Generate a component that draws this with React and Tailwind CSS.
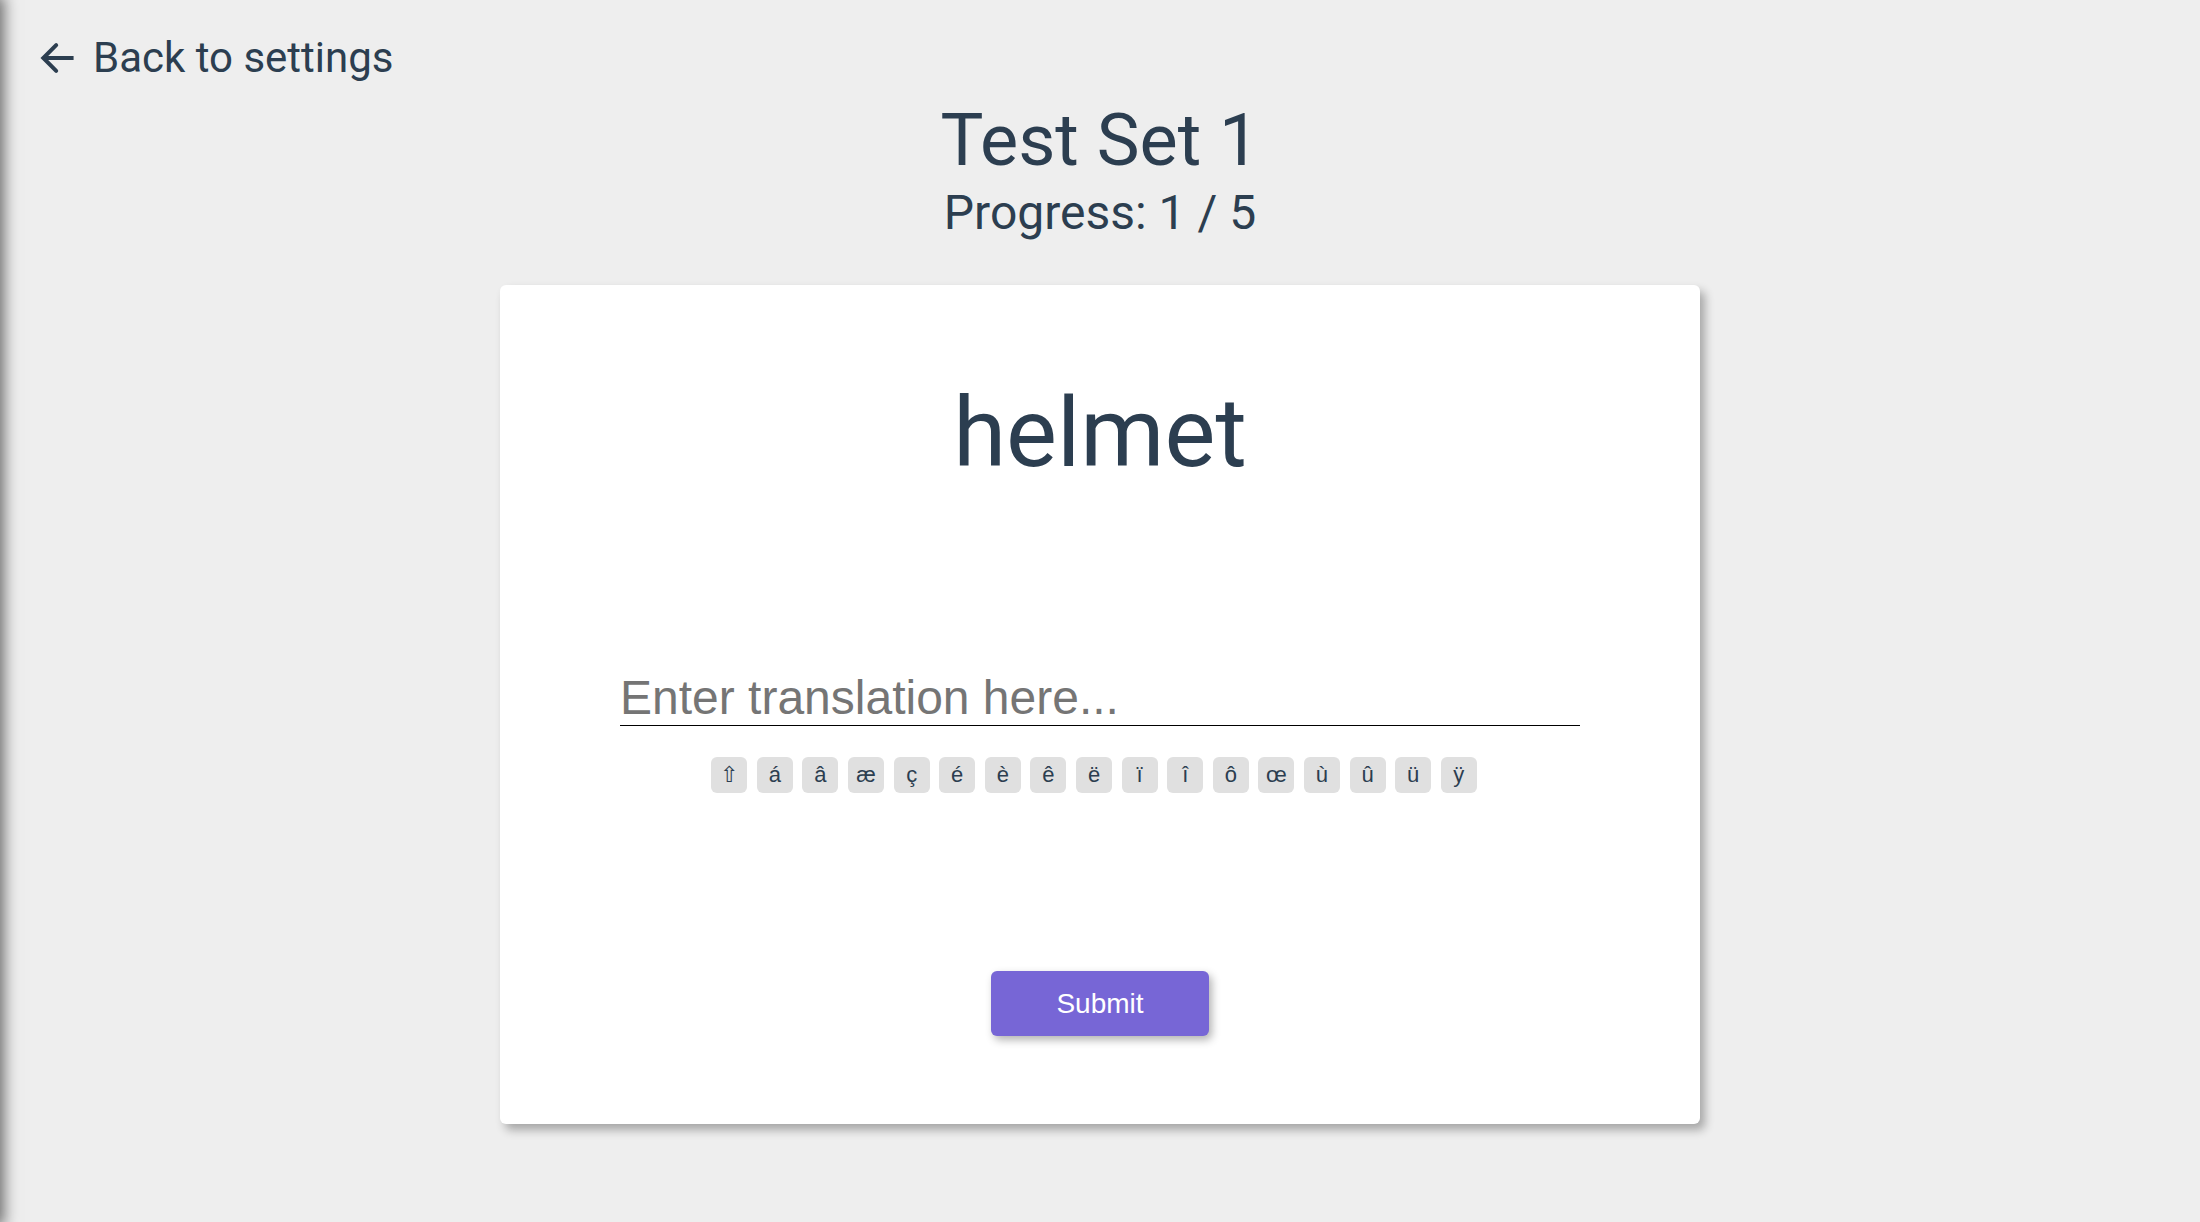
import { useState } from "react";

const accents = ["⇧", "á", "â", "æ", "ç", "é", "è", "ê", "ë", "ï", "î", "ô", "œ", "ù", "û", "ü", "ÿ"];

const App = () => {
  const [answer, setAnswer] = useState("");

  const addChar = (c) => {
    if (c === "⇧") return;
    setAnswer(answer + c);
  };

  return (
    <div className="relative min-h-screen bg-[#eeeeee] text-[#2c3e50] font-['Roboto',sans-serif] overflow-hidden">
      {/* shadow from the hidden drawer on the left */}
      <div className="fixed left-[-300px] top-0 h-full w-[300px] bg-[#eeeeee] shadow-[0_0_14px_4px_rgba(0,0,0,0.55)]" />

      <div className="flex pt-[33px] pl-[36px]">
        <a href="#" className="flex items-center gap-[13px] text-[42px] leading-[50px] text-[#2c3e50] no-underline">
          <svg width="44" height="44" viewBox="0 0 24 24" fill="none" stroke="#2c3e50" strokeWidth="2.2">
            <path d="M20.5 12H4" />
            <path d="M11 5l-7 7 7 7" strokeLinecap="round" />
          </svg>
          <span>Back to settings</span>
        </a>
      </div>

      <h1 className="mt-[16px] text-center text-[72px] leading-[84px] font-normal">Test Set 1</h1>
      <h2 className="mt-[3px] text-center text-[48px] leading-[54px] font-normal">Progress: 1 / 5</h2>

      <div className="mx-auto mt-[45px] w-[1200px] h-[839px] bg-white rounded-md shadow-[5px_6px_10px_rgba(0,0,0,0.3)] flex flex-col items-center">
        <div className="pt-[92px] text-[96px] leading-[112px]">helmet</div>

        <input
          type="text"
          value={answer}
          onChange={(e) => setAnswer(e.target.value)}
          placeholder="Enter translation here..."
          className="mt-[181px] w-[960px] h-[56px] border-0 border-b border-black bg-transparent outline-none font-['Liberation_Sans',Arial,sans-serif] text-[48px] placeholder:text-[#757575] text-[#2c3e50]"
        />

        <div className="mt-[31px] mr-[12px] flex gap-[9.6px]">
          {accents.map((c) => (
            <button
              key={c}
              onClick={() => addChar(c)}
              className="w-[36px] h-[36px] rounded-md bg-[#e0e0e0] font-['Liberation_Sans',Arial,sans-serif] text-[22px] leading-[36px] text-[#2c3e50] flex items-center justify-center"
            >
              {c}
            </button>
          ))}
        </div>

        <button className="mt-[178px] w-[218px] h-[65px] rounded-md bg-[#7766d6] text-white font-['Liberation_Sans',Arial,sans-serif] text-[28px] shadow-[3px_4px_8px_rgba(0,0,0,0.3)]">
          Submit
        </button>
      </div>
    </div>
  );
};

export default App;
